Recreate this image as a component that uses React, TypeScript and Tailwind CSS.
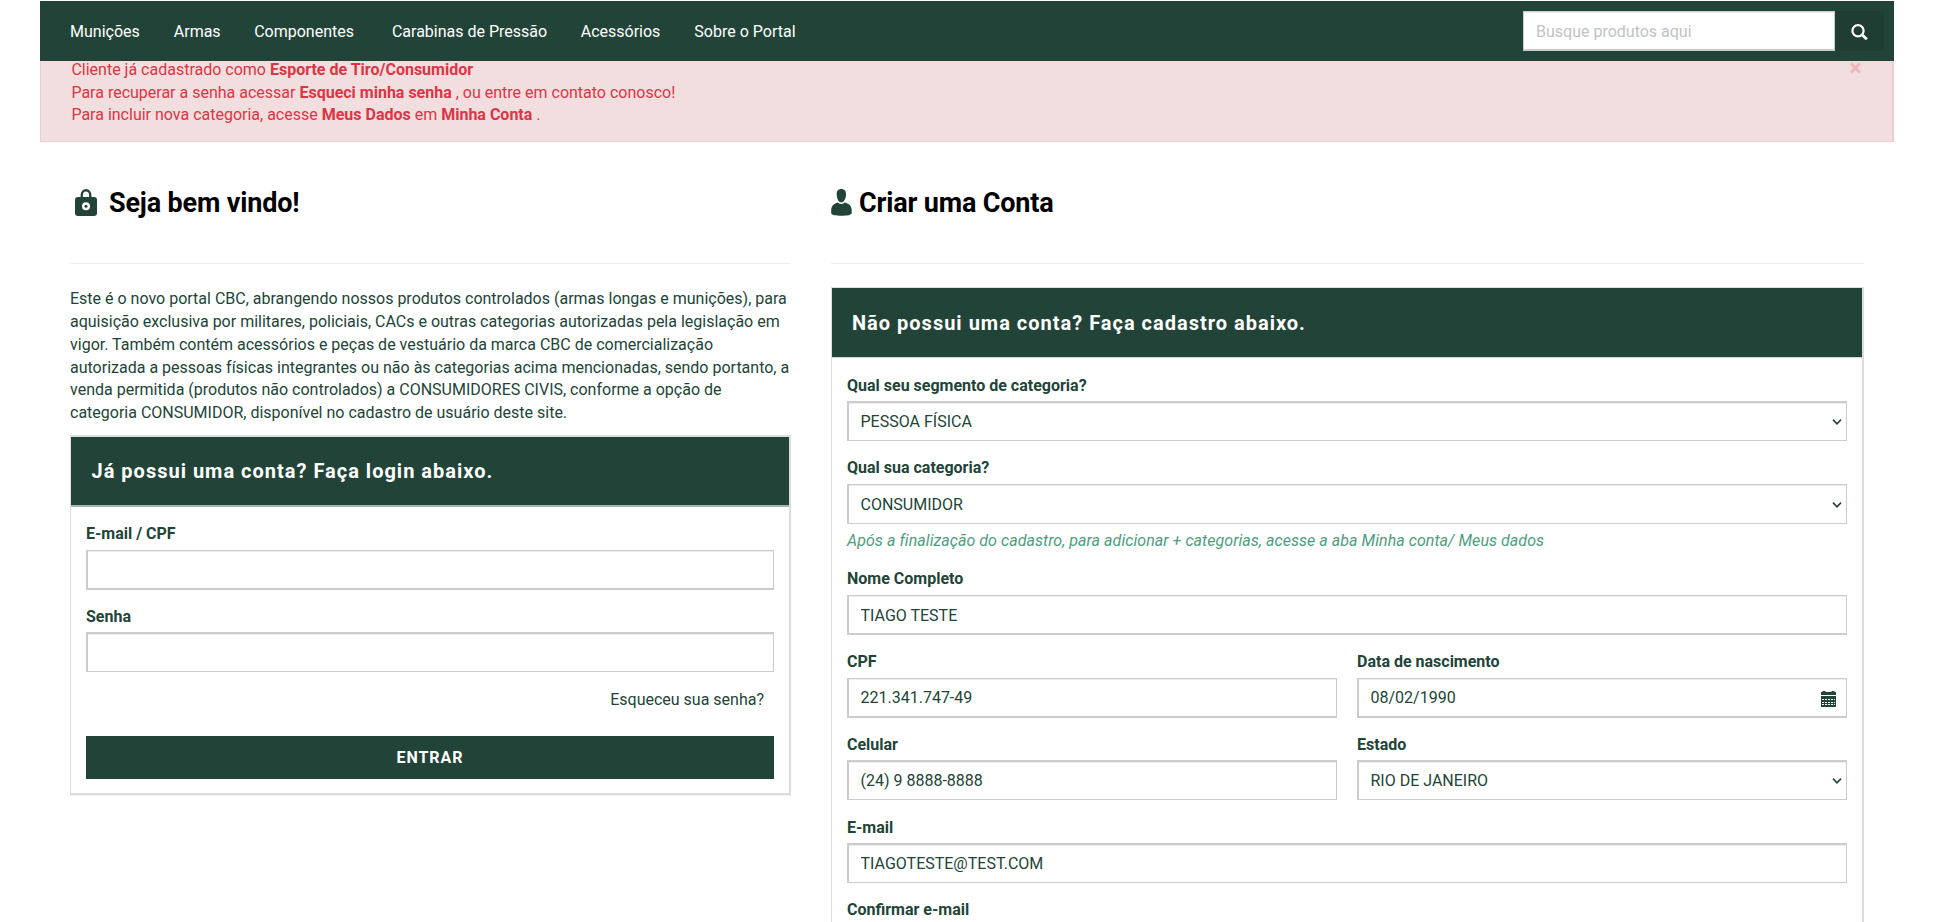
import React from "react";

const fieldBase =
  "block h-10 w-full appearance-none rounded-none border-[#ccc] bg-white pl-[11.5px] pr-3 text-[16px] text-[#224438] shadow-[inset_0_1px_1px_rgba(0,0,0,0.075)] outline-none";
const topHeavy = "border-t-2 border-l-2 border-r border-b";
const bottomHeavy = "border-t border-l-2 border-r border-b-2";
const bottomHeavyLow = "border-t border-l-2 border-r border-b-2 pt-[1px]";
const even = "border-t border-l-2 border-r border-b pt-[1px]";

function Label({ children, tight = false }: { children: React.ReactNode; tight?: boolean }) {
  return (
    <label className={`${tight ? "mb-[4px]" : "mb-[5px]"} block h-[23px] text-[16px] leading-[23px] font-bold`}>{children}</label>
  );
}

function Field({ label, value, edge, type = "text", className = "" }: { label: string; value: string; edge: string; type?: string; className?: string }) {
  return (
    <div className={className}>
      <Label tight={edge === topHeavy}>{label}</Label>
      <input type={type} defaultValue={value} className={`${fieldBase} ${edge}`} />
    </div>
  );
}

function SelectField({ label, value, edge, className = "" }: { label: string; value: string; edge: string; className?: string }) {
  return (
    <div className={className}>
      <Label tight={edge === topHeavy}>{label}</Label>
      <div className={`${fieldBase} ${edge} flex items-center justify-between pr-[4px]`}>
        <span>{value}</span>
        <svg width="10" height="8" viewBox="0 0 10 8" fill="none" stroke="#224438" strokeWidth="1.6" className="mt-px">
          <path d="M1 1.6 5 5.8 9 1.6" />
        </svg>
      </div>
    </div>
  );
}

function LockIcon() {
  return (
    <svg width="22" height="27" viewBox="0 0 22 27" fill="#224438" className="shrink-0">
      <path fillRule="evenodd" d="M3 8H5.6V6A5.4 5.9 0 0 1 16.4 6V8H19A3 3 0 0 1 22 11V24A3 3 0 0 1 19 27H3A3 3 0 0 1 0 24V11A3 3 0 0 1 3 8ZM7.9 8H14.1V6A3.1 3.6 0 0 0 7.9 6ZM11 13.2A4 4 0 1 0 11 21.2A4 4 0 1 0 11 13.2Z" />
      <circle cx="11" cy="17.2" r="1.5" />
    </svg>
  );
}

function UserIcon() {
  return (
    <svg width="21" height="27" viewBox="0 0 21 27" fill="#224438" className="shrink-0">
      <path d="M10.3 0C13.6 0 15.1 2.2 15 5.4C14.9 9.6 13 13.2 10.3 13.2S5.8 9.6 5.7 5.4C5.6 2.2 7 0 10.3 0Z" />
      <path d="M6.9 13.4Q10.3 16.6 13.8 13.4C18.5 14.6 20.7 17 20.7 21.5V24.3C20.7 26 16 26.8 10.4 26.8S.2 26 .2 24.3V21.5C.2 17 2.3 14.6 6.9 13.4Z" />
    </svg>
  );
}

function CalendarIcon() {
  const columns = [1, 4, 7, 10];
  const rows = [8, 11, 13];
  return (
    <svg width="15" height="16" viewBox="0 0 15 16" fill="#224438" className="block">
      <path d="M0 1H1.5V0H4.5V1H10.5V0H13.5V1H15V4H0ZM0 5H15V16H0Z" />
      <g fill="#fff">
        {rows.map((y) => columns.map((x) => <rect key={`${x}-${y}`} x={x} y={y} width="2" height="1" />))}
        <path d="M13 8H14V9H13ZM13 11H14V12H13ZM13 13H14V14H13Z" />
      </g>
    </svg>
  );
}

export default function App() {
  return (
    <div className="h-[922px] overflow-hidden bg-white px-10 pt-px font-['Roboto',sans-serif] text-[16px] text-[#224438]">
      <div className="w-[1854px]">
        <header className="flex h-[60px] items-center bg-[#224438] pr-[10px] pl-[30px] text-white">
          <nav className="flex leading-[23px]">
            <a className="mr-[34px]">Munições</a>
            <a className="mr-[33.5px]">Armas</a>
            <a className="mr-[38px]">Componentes</a>
            <a className="mr-[33.5px]">Carabinas de Pressão</a>
            <a className="mr-[34px]">Acessórios</a>
            <a>Sobre o Portal</a>
          </nav>
          <form className="ml-auto flex h-10">
            <input
              placeholder="Busque produtos aqui"
              className="h-10 w-[312px] border border-b-2 border-[#ccc] bg-white px-3 pt-[2px] text-[16px] shadow-[inset_0_1px_1px_rgba(0,0,0,0.075)] placeholder:text-[#c0c3c8]"
            />
            <button type="button" className="flex h-10 w-[49px] items-center justify-center rounded-r-[2px] bg-[#1f3d33]">
              <svg width="17" height="17" viewBox="0 0 17 17" fill="none" stroke="#fff" className="mt-[2px]">
                <circle cx="7" cy="6.7" r="5.6" strokeWidth="2.2" />
                <path d="M11 10.7 15.8 15.3" strokeWidth="2.8" />
              </svg>
            </button>
          </form>
        </header>

        <section className="flex h-[81px] items-start justify-between border-r-2 border-b border-l border-[#ebccd1] bg-[#f2dede] pr-[30px] pl-[30.4px] text-[#dc3545]">
          <p className="-mt-[2px] leading-[22.6px]">
            Cliente já cadastrado como <b>Esporte de Tiro/Consumidor</b>
            <br />
            Para recuperar a senha acessar <b>Esqueci minha senha</b> , ou entre em contato conosco!
            <br />
            Para incluir nova categoria, acesse <b>Meus Dados</b> em <b>Minha Conta</b> .
          </p>
          <button type="button" className="-mt-[5px] text-[24px] leading-[24px] font-bold text-[#efb7be]">×</button>
        </section>

        <main className="flex pr-[30px] pl-[30px]">
          <section className="w-[721px] shrink-0">
            <div className="flex h-[122px] items-start border-b border-[#eee] pt-[47px] pl-[5px]">
              <LockIcon />
              <h1 className="-mt-px ml-[12px] text-[27px] leading-[30px] font-bold tracking-[-0.17px] text-black">Seja bem vindo!</h1>
            </div>
            <p className="mt-[24px] w-[721px] leading-[22.857px]">
              Este é o novo portal CBC, abrangendo nossos produtos controlados (armas longas e munições), para
              <br />
              aquisição exclusiva por militares, policiais, CACs e outras categorias autorizadas pela legislação em
              <br />
              vigor. Também contém acessórios e peças de vestuário da marca CBC de comercialização
              <br />
              autorizada a pessoas físicas integrantes ou não às categorias acima mencionadas, sendo portanto, a
              <br />
              venda permitida (produtos não controlados) a CONSUMIDORES CIVIS, conforme a opção de
              <br />
              categoria CONSUMIDOR, disponível no cadastro de usuário deste site.
            </p>
            <div className="mt-[9.8px] h-[360px] border-t-2 border-r-2 border-b-2 border-l border-[#ddd] shadow-[0_1px_1px_rgba(0,0,0,0.05)]">
              <h2 className="h-[70px] border-b-2 border-[#a9b3af] bg-[#224438] pl-[20.5px] text-[20px] leading-[68px] font-bold tracking-[1px] text-white">
                Já possui uma conta? Faça login abaixo.
              </h2>
              <div className="pt-[15px] pr-[15px] pl-[15px]">
                <Field label="E-mail / CPF" value="" edge={bottomHeavy} />
                <Field label="Senha" value="" edge={topHeavy} type="password" className="mt-[15px]" />
                <a className="mt-4 mr-[10px] block text-right leading-[23px]">Esqueceu sua senha?</a>
                <button type="button" className="mt-[25px] block h-[43px] w-full bg-[#224438] pt-[2px] text-[16px] font-bold tracking-[1px] text-white">
                  ENTRAR
                </button>
              </div>
            </div>
          </section>

          <section className="ml-10 w-[1033px] shrink-0">
            <div className="flex h-[122px] items-start border-b border-[#eee] pt-[47px]">
              <UserIcon />
              <h1 className="-mt-px ml-[7px] text-[27px] leading-[30px] font-bold tracking-[-0.17px] text-black">Criar uma Conta</h1>
            </div>
            <div className="mt-[23px] border-t border-r-2 border-l border-[#ddd]">
              <h2 className="h-[70px] border-b border-[#ccd6d2] bg-[#224438] pl-5 text-[20px] leading-[71px] font-bold tracking-[1px] text-white">
                Não possui uma conta? Faça cadastro abaixo.
              </h2>
              <div className="h-[600px] pt-[16px] pr-[15px] pl-[15px]">
                <SelectField label="Qual seu segmento de categoria?" value="PESSOA FÍSICA" edge={topHeavy} />
                <SelectField label="Qual sua categoria?" value="CONSUMIDOR" edge={even} className="mt-[15px]" />
                <p className="mt-[5px] h-[23px] leading-[23px] tracking-[0.055px] text-[#4f9c80] italic">
                  Após a finalização do cadastro, para adicionar + categorias, acesse a aba Minha conta/ Meus dados
                </p>
                <Field label="Nome Completo" value="TIAGO TESTE" edge={bottomHeavyLow} className="mt-[15px]" />
                <div className="mt-[15px] grid grid-cols-2 gap-5">
                  <Field label="CPF" value="221.341.747-49" edge={bottomHeavy} />
                  <div className="relative">
                    <Field label="Data de nascimento" value="08/02/1990" edge={bottomHeavy} />
                    <span className="absolute right-[11px] bottom-[11px]">
                      <CalendarIcon />
                    </span>
                  </div>
                </div>
                <div className="mt-[15px] grid grid-cols-2 gap-5">
                  <Field label="Celular" value="(24) 9 8888-8888" edge={topHeavy} />
                  <SelectField label="Estado" value="RIO DE JANEIRO" edge={topHeavy} />
                </div>
                <Field label="E-mail" value="TIAGOTESTE@TEST.COM" edge={topHeavy} className="mt-[16px]" />
                <Field label="Confirmar e-mail" value="" edge={topHeavy} className="mt-[15px]" />
              </div>
            </div>
          </section>
        </main>
      </div>
    </div>
  );
}
